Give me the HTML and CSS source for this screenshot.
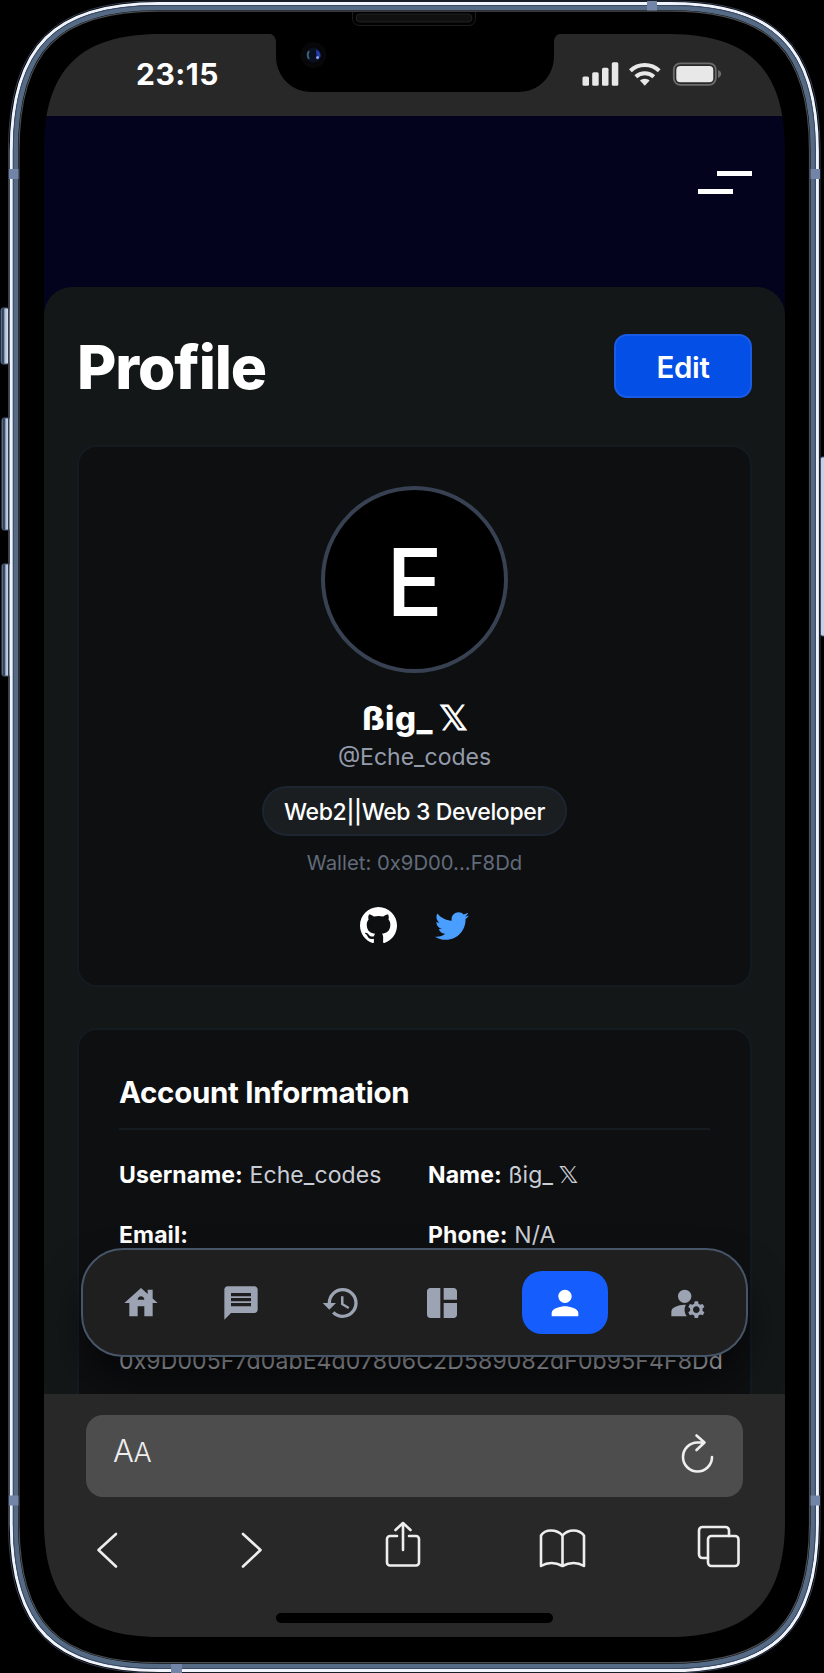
FILE: index.html
```html
<!DOCTYPE html>
<html lang="en">
<head>
<meta charset="utf-8">
<title>Profile</title>
<link rel="stylesheet" href="styles.css">
</head>
<body>
<div class="phone">
  <div class="screen">
    <div class="status">
      <span class="time">23:15</span>
      <svg class="status-icons" width="140" height="24" viewBox="0 0 140 24">
        <g fill="#e8e8e8">
          <rect x="0.5" y="14.5" width="6.5" height="9.3" rx="1.5"/>
          <rect x="10.2" y="10.3" width="6.5" height="13.5" rx="1.5"/>
          <rect x="20" y="5.8" width="6.5" height="18" rx="1.5"/>
          <rect x="29.8" y="0.3" width="6.5" height="23.5" rx="1.5"/>
          <path d="M62.800 16.800c-1.900 0-3.600.7-4.800 1.800l4.800 5.200 4.800-5.200c-1.200-1.100-2.900-1.800-4.800-1.800z"/>
          <rect x="94.300" y="4" width="37" height="16.300" rx="4"/>
        </g>
        <g fill="none" stroke="#e8e8e8" stroke-width="4">
          <path d="M53.800 14.800a13 13 0 0 1 18 0"/>
          <path d="M48.400 8.700a20.800 20.800 0 0 1 28.800 0"/>
        </g>
        <rect x="91.800" y="1.300" width="42" height="21.500" rx="6.500" fill="none" stroke="#6b6b6b" stroke-width="1.800"/>
        <path d="M136 8c2 .8 3.200 2.200 3.200 4s-1.200 3.200-3.200 4z" fill="#6b6b6b"/>
      </svg>
    </div>

    <div class="viewport">
      <header class="topbar">
        <div class="menu"><span class="bar bar-end"></span><span class="bar"></span></div>
      </header>
      <main class="panel">
        <div class="title-row">
          <h1>Profile</h1>
          <button class="edit">Edit</button>
        </div>
        <section class="card hero">
          <div class="avatar">E</div>
          <h2 class="name">ßig_<span class="dx">𝕏</span></h2>
          <p class="handle">@Eche_codes</p>
          <span class="pill">Web2||Web 3 Developer</span>
          <p class="wallet">Wallet: 0x9D00...F8Dd</p>
          <div class="social">
            <svg width="37" height="37" viewBox="0 0 16 16" fill="#fff"><path d="M8 0C3.580 0 0 3.580 0 8c0 3.540 2.290 6.530 5.470 7.590.4.070.55-.17.55-.38 0-.19-.01-.82-.01-1.490-2.010.37-2.530-.49-2.690-.94-.09-.23-.48-.94-.82-1.130-.28-.15-.68-.52-.01-.53.63-.01 1.080.58 1.230.82.72 1.210 1.870.87 2.330.66.070-.52.28-.87.51-1.070-1.780-.2-3.640-.89-3.640-3.950 0-.87.31-1.590.82-2.150-.08-.2-.36-1.020.08-2.120 0 0 .67-.21 2.200.82.64-.18 1.320-.27 2-.27s1.360.09 2 .27c1.530-1.040 2.200-.82 2.200-.82.44 1.100.16 1.920.08 2.120.51.56.82 1.270.82 2.150 0 3.070-1.870 3.750-3.650 3.950.29.25.54.73.54 1.480 0 1.070-.01 1.930-.01 2.200 0 .21.15.46.55.38A8.010 8.010 0 0 0 16 8c0-4.420-3.580-8-8-8z"/></svg>
            <svg width="34" height="34" viewBox="0 0 512 512" fill="#4a9eff"><path d="M459.370 151.716c.325 4.548.325 9.097.325 13.645 0 138.720-105.583 298.558-298.558 298.558-59.452 0-114.680-17.219-161.137-47.106 8.447.974 16.568 1.299 25.340 1.299 49.055 0 94.213-16.568 130.274-44.832-46.132-.975-84.792-31.188-98.112-72.772 6.498.974 12.995 1.624 19.818 1.624 9.421 0 18.843-1.300 27.614-3.573-48.081-9.747-84.143-51.980-84.143-102.985v-1.299c13.969 7.797 30.214 12.670 47.431 13.319-28.264-18.843-46.781-51.005-46.781-87.391 0-19.492 5.197-37.360 14.294-52.954 51.655 63.675 129.300 105.258 216.365 109.807-1.624-7.797-2.599-15.918-2.599-24.040 0-57.828 46.782-104.934 104.934-104.934 30.213 0 57.502 12.670 76.670 33.137 23.715-4.548 46.456-13.320 66.599-25.340-7.798 24.366-24.366 44.833-46.132 57.827 21.117-2.273 41.584-8.122 60.426-16.243-14.292 20.791-32.161 39.308-52.628 54.253z"/></svg>
          </div>
        </section>
        <section class="card account">
          <h3>Account Information</h3>
          <div class="fields">
            <p><b>Username:</b> Eche_codes</p>
            <p><b>Name:</b> ßig_<span class="dx">𝕏</span></p>
            <p><b>Email:</b></p>
            <p><b>Phone:</b> N/A</p>
          </div>
          <p class="address">0x9D005F7d0abE4d07806C2D589082dF0b95F4F8Dd</p>
        </section>
      </main>
      <nav class="dock">
        <svg viewBox="0 0 24 24"><path d="M19 9.300V4h-3v2.600L12 3 2 12h3v8h5v-6h4v6h5v-8h3l-3-2.700zm-9 .7c0-1.100.9-2 2-2s2 .9 2 2h-4z"/></svg>
        <svg viewBox="0 0 24 24"><path d="M20 2H4c-1.100 0-1.990.9-1.990 2L2 22l4-4h14c1.100 0 2-.9 2-2V4c0-1.100-.9-2-2-2zm-2 12H6v-2h12v2zm0-3H6V9h12v2zm0-3H6V6h12v2z"/></svg>
        <svg viewBox="0 0 24 24"><path d="M13 3a9 9 0 0 0-9 9H1l3.890 3.890.070.140L9 12H6c0-3.870 3.130-7 7-7s7 3.130 7 7-3.130 7-7 7c-1.930 0-3.680-.79-4.940-2.060l-1.420 1.420A8.954 8.954 0 0 0 13 21a9 9 0 0 0 0-18zm-1 5v5l4.280 2.540.72-1.210-3.500-2.080V8H12z"/></svg>
        <svg viewBox="0 0 24 24"><path d="M11 21H5c-1.100 0-2-.9-2-2V5c0-1.100.9-2 2-2h6v18zm2 0h6c1.100 0 2-.9 2-2v-7h-8v9zm8-11V5c0-1.100-.9-2-2-2h-6v7h8z"/></svg>
        <span class="active"><svg viewBox="0 0 24 24"><path d="M12 12c2.210 0 4-1.790 4-4s-1.790-4-4-4-4 1.790-4 4 1.790 4 4 4zm0 2c-2.670 0-8 1.340-8 4v2h16v-2c0-2.660-5.330-4-8-4z"/></svg></span>
        <svg viewBox="0 0 24 24"><circle cx="10" cy="8" r="4"/><path d="M10.670 13.020c-.22-.01-.44-.02-.67-.02-2.420 0-4.680.67-6.610 1.820-.88.52-1.390 1.500-1.390 2.530V20h9.260a6.963 6.963 0 0 1-.59-6.980zM20.750 16c0-.22-.03-.42-.06-.63l1.140-1.010-1-1.730-1.450.49c-.32-.27-.68-.48-1.080-.63L18 11h-2l-.3 1.490c-.4.150-.76.360-1.080.630l-1.450-.49-1 1.730 1.140 1.010c-.03.210-.06.410-.06.630s.03.420.06.630l-1.140 1.010 1 1.730 1.450-.49c.32.270.68.480 1.080.630L16 21h2l.3-1.490c.4-.15.76-.36 1.080-.63l1.450.490 1-1.730-1.140-1.010c.03-.21.06-.41.06-.63zM17 18c-1.100 0-2-.9-2-2s.9-2 2-2 2 .9 2 2-.9 2-2 2z"/></svg>
      </nav>
    </div>

    <footer class="browser">
      <div class="address-bar">
        <span class="aa">A<small>A</small></span>
        <svg width="34" height="42" viewBox="0 0 34 42"><path d="M31 24A14.500 14.500 0 1 1 16.500 9.500H22.500M15.500 2.500l8 7-8 7.500"/></svg>
      </div>
      <div class="tools">
        <svg width="22" height="50" viewBox="0 0 22 50"><path d="M20 14L2.500 30 20 46.500"/></svg>
        <svg width="22" height="50" viewBox="0 0 22 50"><path d="M2 14l17.500 16L2 46.500"/></svg>
        <svg width="36" height="50" viewBox="0 0 36 50"><path d="M12 16H5a3 3 0 0 0-3 3v23.500a3 3 0 0 0 3 3h26a3 3 0 0 0 3-3V19a3 3 0 0 0-3-3h-7M18 30V3M10.500 10L18 3l7.500 7"/></svg>
        <svg width="47" height="50" viewBox="0 0 47 50"><path d="M2 46V15.500Q5 10.500 12 10.500T23.500 15.500Q28 10.500 34.500 10.500T45 15.500V46Q40 43 34.500 43T23.500 46Q18 43 12.500 43T2 46zM23.500 15.500V46"/></svg>
        <svg width="43" height="50" viewBox="0 0 43 50"><rect x="11" y="16" width="30.500" height="30" rx="3.500"/><path d="M11 38H5.500A3.500 3.500 0 0 1 2 34.500V10.500A3.500 3.500 0 0 1 5.500 7H28.500A3.500 3.500 0 0 1 32 10.500V16"/></svg>
      </div>
      <div class="home-indicator"></div>
    </footer>
  </div>

  <svg class="shell" width="824" height="1673" viewBox="0 0 824 1673">
    <defs>
      <linearGradient id="key" x1="0" x2="1" y1="0" y2="0">
        <stop offset="0" stop-color="#7f97b3"/><stop offset=".25" stop-color="#1b2537"/><stop offset=".5" stop-color="#aebfd8"/><stop offset=".85" stop-color="#d3dcf2"/><stop offset="1" stop-color="#1b2537"/>
      </linearGradient>
    </defs>
    <path fill="#000" fill-rule="evenodd" d="M0 0H824V1673H0zM44 150C44 70 80 34 160 34H669C749 34 785 70 785 150V1521C785 1601 749 1637 669 1637H160C80 1637 44 1601 44 1521z"/>
    <path fill="#000" d="M268 33.500C273 34 276 37 276 42V56C276 76 291 92 312 92H518C539 92 554 76 554 56V42C554 37 557 34 562 33.500z"/>
    <rect x="1" y="308" width="8" height="56" rx="2" fill="url(#key)" stroke="#4b5d78"/>
    <rect x="2" y="418" width="8" height="112" rx="2" fill="url(#key)" stroke="#4b5d78"/>
    <rect x="2" y="564" width="8" height="112" rx="2" fill="url(#key)" stroke="#4b5d78"/>
    <rect x="820.500" y="457" width="6" height="179" rx="2" fill="#c5d0e6" stroke="#4b5d78"/>
    <g fill="none">
      <path stroke="#333d52" d="M8.500 151C8.500 45.400 52.900 1 158.500 1H670C775.600 1 820 45.400 820 151V1523C820 1628.600 775.600 1673 670 1673H158.500C52.900 1673 8.500 1628.600 8.500 1523z"/>
      <path stroke="#eff3fc" stroke-width="3.200" d="M11.300 151C11.300 46.600 54.400 3.500 158.500 3.500H670C774.200 3.500 817.300 46.600 817.300 151V1523C817.300 1627.400 774.200 1670.500 670 1670.500H158.500C54.400 1670.500 11.300 1627.400 11.300 1523z"/>
      <path stroke="#546a85" stroke-width="5" d="M15.500 151C15.500 49 56.800 7.700 158.500 7.700H670C771.700 7.700 813 49 813 151V1523C813 1624.900 771.700 1666.200 670 1666.200H158.500C56.800 1666.200 15.500 1624.900 15.500 1523z"/>
      <path stroke="#3a4a66" d="M13.300 151C13.300 47.800 55.600 5.500 158.500 5.500H670C773 5.500 815.300 47.800 815.300 151V1523C815.300 1626.200 773 1668.500 670 1668.500H158.500C55.600 1668.500 13.300 1626.200 13.300 1523z"/>
      <path stroke="#4a4c50" stroke-width="1.200" d="M19 151C19 50.900 58.700 11.200 158.500 11.200H670C769.800 11.200 809.500 50.900 809.500 151V1523C809.500 1623 769.800 1662.700 670 1662.700H158.500C58.700 1662.700 19 1623 19 1523z"/>
    </g>
    <g fill="#7284a8">
      <rect x="9" y="169" width="9.500" height="10"/><rect x="810.500" y="169" width="9.500" height="10"/>
      <rect x="9" y="1495.500" width="9.500" height="10"/><rect x="810.500" y="1495.500" width="9.500" height="10"/>
      <rect x="647" y="1" width="10" height="9.500"/><rect x="171" y="1664" width="11" height="9"/>
    </g>
    <path d="M352.500 12V19Q353 25.500 360 25.500H468Q475 25.500 475.500 19V12" fill="#020202" stroke="#1c1c1c"/>
    <rect x="356" y="14" width="116" height="8" rx="4" fill="#101010" stroke="#262626" stroke-width=".8"/>
    <circle cx="313.500" cy="55" r="13" fill="#070709"/><circle cx="313.500" cy="55" r="7.500" fill="#091020"/>
    <path d="M309 51q-2.500 4 0 8" fill="none" stroke="#365f78" stroke-width="2"/>
    <path d="M316 49.500q5 2 4.500 7l-3 3.500q-1.500-6-1.500-10.500z" fill="#233caa"/><circle cx="317.500" cy="57.500" r="1.500" fill="#8da5e8"/>
  </svg>
</div>
</body>
</html>
```
FILE: styles.css
```css
* { box-sizing: border-box; margin: 0; padding: 0; }
body { width: 824px; height: 1673px; background: #000; overflow: hidden; font-family: Inter, "DejaVu Sans", sans-serif; color: #fff; }
svg { display: block; flex: none; }

.phone { position: relative; width: 824px; height: 1673px; padding: 34px 39px 36px 44px; }
.screen { display: flex; flex-direction: column; height: 1603px; background: #04031e; }
.shell { position: absolute; left: 0; top: 0; pointer-events: none; }

.status { height: 82px; background: #282828; display: flex; justify-content: space-between; padding: 22px 63px 0 92px; }
.time { font-size: 30px; font-weight: 650; line-height: 37px; letter-spacing: .5px; }
.status-icons { margin-top: 6px; }

.viewport { position: relative; height: 1278px; overflow: hidden; }
.topbar { height: 171px; padding: 55px 33px 0; display: flex; justify-content: flex-end; }
.menu { width: 54px; display: flex; flex-direction: column; gap: 13px; }
.bar { width: 35px; height: 5px; background: #fff; }
.bar-end { align-self: flex-end; }

.panel { height: 1240px; background: #131717; border-radius: 28px 28px 0 0; padding: 47px 33px 0; }
.title-row { display: flex; justify-content: space-between; align-items: center; height: 64px; }
h1 { font-size: 60.500px; line-height: 66px; padding-top: 1px; font-weight: 800; letter-spacing: -1.100px; }
.edit { width: 138px; height: 64px; padding-top: 1px; border: 2px solid #1a5be8; border-radius: 13px; background: #044fe5; color: #fff; font: 600 29.500px/36px Inter, sans-serif; letter-spacing: -.4px; }

.card { border: 2px solid #131b21; border-radius: 20px; background: #0e0f11; }
.hero { height: 542px; margin-top: 47px; padding-top: 39px; display: flex; flex-direction: column; align-items: center; }
.avatar { width: 187px; height: 187px; border: 4px solid #374151; border-radius: 50%; background: #000; font-size: 94px; font-weight: 450; line-height: 185px; text-align: center; }
.name { margin-top: 25px; font-size: 33px; line-height: 40px; font-weight: 800; letter-spacing: .5px; white-space: nowrap; }
.dx { display: inline-block; margin-left: 6px; font-family: "DejaVu Sans", sans-serif; font-weight: 400; line-height: 1; letter-spacing: 0; transform: scaleX(1.12); }
.name .dx { margin-left: 7px; -webkit-text-stroke: .8px #fff; }
.handle { font-size: 23px; line-height: 38px; color: #949baa; }
.pill { margin-top: 10px; width: 305px; height: 50px; padding-top: 1px; border: 2px solid #1c2530; border-radius: 25px; background: #1a1e21; font-size: 23px; line-height: 46px; font-weight: 500; letter-spacing: -.35px; text-align: center; white-space: nowrap; }
.wallet { margin-top: 12px; font-size: 20.300px; line-height: 30px; color: #626b7a; }
.social { display: flex; align-items: center; gap: 38px; margin-top: 29px; }

.account { margin-top: 41px; height: 460px; padding: 42px 40px 0; }
h3 { font-size: 29.500px; line-height: 40px; font-weight: 650; letter-spacing: -.3px; padding-bottom: 16px; border-bottom: 2px solid #141c22; white-space: nowrap; }
.fields { margin-top: 27px; display: grid; grid-template-columns: 1fr 1fr; column-gap: 27px; row-gap: 24px; font-size: 23px; line-height: 36px; letter-spacing: .1px; color: #cacdd5; white-space: nowrap; }
.fields p { min-width: 0; }
.fields b { color: #fff; font-weight: 650; letter-spacing: .1px; }
.address { margin-top: 90px; font-size: 23px; line-height: 36px; letter-spacing: .13px; color: #cacdd5; white-space: nowrap; }

.dock { position: absolute; left: 37px; top: 1132px; width: 667px; height: 109px; padding: 0 38px; border: 2px solid #475569; border-radius: 42px; background: #1f1f1f; box-shadow: 0 24px 48px -10px rgba(0, 0, 0, .8); display: flex; align-items: center; justify-content: space-between; color: #9ca3b2; }
.dock svg { width: 40px; height: 40px; fill: currentColor; }
.active { width: 86px; height: 63px; border-radius: 20px; background: #155dfc; color: #fff; display: flex; align-items: center; justify-content: center; }

.browser { height: 243px; background: #282828; padding: 21px 42px 0; }
.address-bar { height: 82px; border-radius: 17px; background: #4d4d4d; display: flex; justify-content: space-between; padding: 18px 28px 0 27px; }
.aa { font-size: 31px; line-height: 36px; font-weight: 350; color: #eee; letter-spacing: -.4px; }
.aa small { font-size: 27px; }
.browser svg { fill: none; stroke: #eee; stroke-width: 2.600; stroke-linecap: round; stroke-linejoin: round; }
.tools { display: grid; grid-template-columns: 145px 144px 154px 158px 43px; margin-top: 23px; padding-left: 10px; }
.home-indicator { width: 277px; height: 10px; margin: 43px auto 0; border-radius: 5px; background: #000; }
```
